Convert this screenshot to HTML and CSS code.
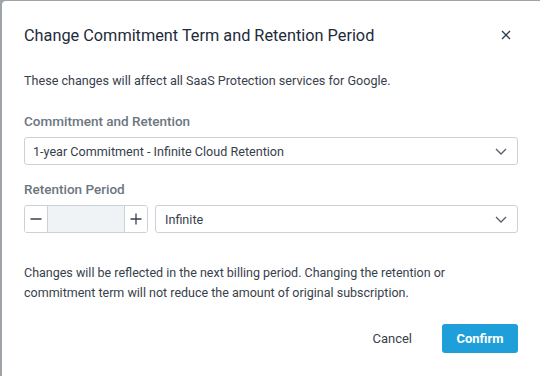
FILE: index.html
```html
<!DOCTYPE html>
<html lang="en">
<head>
    <meta charset="UTF-8">
    <title>Change Commitment Term and Retention Period</title>
    <link rel="stylesheet" href="styles.css">
</head>
<body>

<div class="modal">
    <div class="modal-header">
        <h2>Change Commitment Term and Retention Period</h2>
        <button class="close-btn" aria-label="Close">
            <svg width="10" height="10" viewBox="0 0 10 10"><path d="M1 1L9 9M9 1L1 9" stroke="#2e3f50" stroke-width="1.4" fill="none"/></svg>
        </button>
    </div>

    <p class="intro">These changes will affect all SaaS Protection services for Google.</p>

    <div class="field">
        <label>Commitment and Retention</label>
        <div class="select">
            <span>1-year Commitment - Infinite Cloud Retention</span>
            <svg class="chevron" width="12" height="7" viewBox="0 0 12 7"><path d="M1 1L6 6L11 1" stroke="#555f6a" stroke-width="1.3" fill="none"/></svg>
        </div>
    </div>

    <div class="field">
        <label>Retention Period</label>
        <div class="row">
            <div class="stepper">
                <button class="step" aria-label="Decrease">
                    <svg width="12" height="12" viewBox="0 0 12 12"><path d="M0.5 6H11.5" stroke="#37414c" stroke-width="1.3"/></svg>
                </button>
                <input type="text" class="step-input">
                <button class="step" aria-label="Increase">
                    <svg width="12" height="12" viewBox="0 0 12 12"><path d="M0.5 6H11.5M6 0.5V11.5" stroke="#37414c" stroke-width="1.3"/></svg>
                </button>
            </div>
            <div class="select grow">
                <span>Infinite</span>
                <svg class="chevron" width="12" height="7" viewBox="0 0 12 7"><path d="M1 1L6 6L11 1" stroke="#555f6a" stroke-width="1.3" fill="none"/></svg>
            </div>
        </div>
    </div>

    <p class="note">Changes will be reflected in the next billing period. Changing the retention or commitment term will not reduce the amount of original subscription.</p>

    <div class="actions">
        <button class="btn-cancel">Cancel</button>
        <button class="btn-confirm">Confirm</button>
    </div>
</div>

</body>
</html>
```

FILE: styles.css
```css
body {
    margin: 0;
    font-family: Roboto, "Liberation Sans", sans-serif;
    background-color: #9ea3a9;
    height: 376px;
    overflow: hidden;
    padding: 1px 0 0 2px;
    box-sizing: border-box;
}
.modal {
    background-color: #fff;
    border-radius: 4px 0 0 0;
    height: 375px;
    padding: 0 22px 0 22px;
    color: #37414c;
    box-sizing: border-box;
}
.modal-header {
    display: flex;
    justify-content: space-between;
    align-items: center;
    height: 68px;
}
.modal-header h2 {
    margin: 0;
    font-size: 16.3px;
    font-weight: 400;
    color: #1d2b3a;
}
.close-btn {
    border: none;
    background: none;
    padding: 0;
    margin-right: 7px;
    width: 10px;
    height: 10px;
    display: flex;
}
.intro {
    margin: 3px 0 0;
    font-size: 12.6px;
    line-height: 18px;
}
.field {
    margin-top: 22px;
}
.field + .field {
    margin-top: 15px;
}
.field label {
    display: block;
    font-size: 13.5px;
    font-weight: 500;
    color: #6c7680;
    line-height: 18px;
    margin-bottom: 7px;
}
.select {
    display: flex;
    justify-content: space-between;
    align-items: center;
    height: 28px;
    border: 1px solid #ccd1d6;
    border-radius: 3px;
    padding: 0 10px 0 8px;
    font-size: 12.6px;
    color: #37414c;
    box-sizing: border-box;
}
.row {
    display: flex;
    gap: 7px;
}
.grow {
    flex: 1;
    padding-left: 9px;
}
.stepper {
    display: flex;
    width: 124px;
    height: 28px;
    border: 1px solid #ccd1d6;
    border-radius: 3px;
    box-sizing: border-box;
    overflow: hidden;
}
.step {
    width: 23px;
    border: none;
    background: #fff;
    padding: 0;
    display: flex;
    align-items: center;
    justify-content: center;
}
.step-input {
    width: 76px;
    border: none;
    border-left: 1px solid #ccd1d6;
    border-right: 1px solid #ccd1d6;
    background: #f0f3f6;
    padding: 0;
    margin: 0;
}
.note {
    margin: 30px 0 0;
    font-size: 12.5px;
    line-height: 20px;
}
.actions {
    display: flex;
    justify-content: flex-end;
    align-items: center;
    margin-top: 21px;
    gap: 30px;
}
.btn-cancel {
    border: none;
    background: none;
    font-family: inherit;
    font-size: 13px;
    color: #37414c;
    padding: 0;
}
.btn-confirm {
    border: none;
    background-color: #1f9fd9;
    color: #fff;
    font-family: inherit;
    font-size: 13px;
    font-weight: 700;
    width: 76px;
    height: 29px;
    border-radius: 3px;
}
```
